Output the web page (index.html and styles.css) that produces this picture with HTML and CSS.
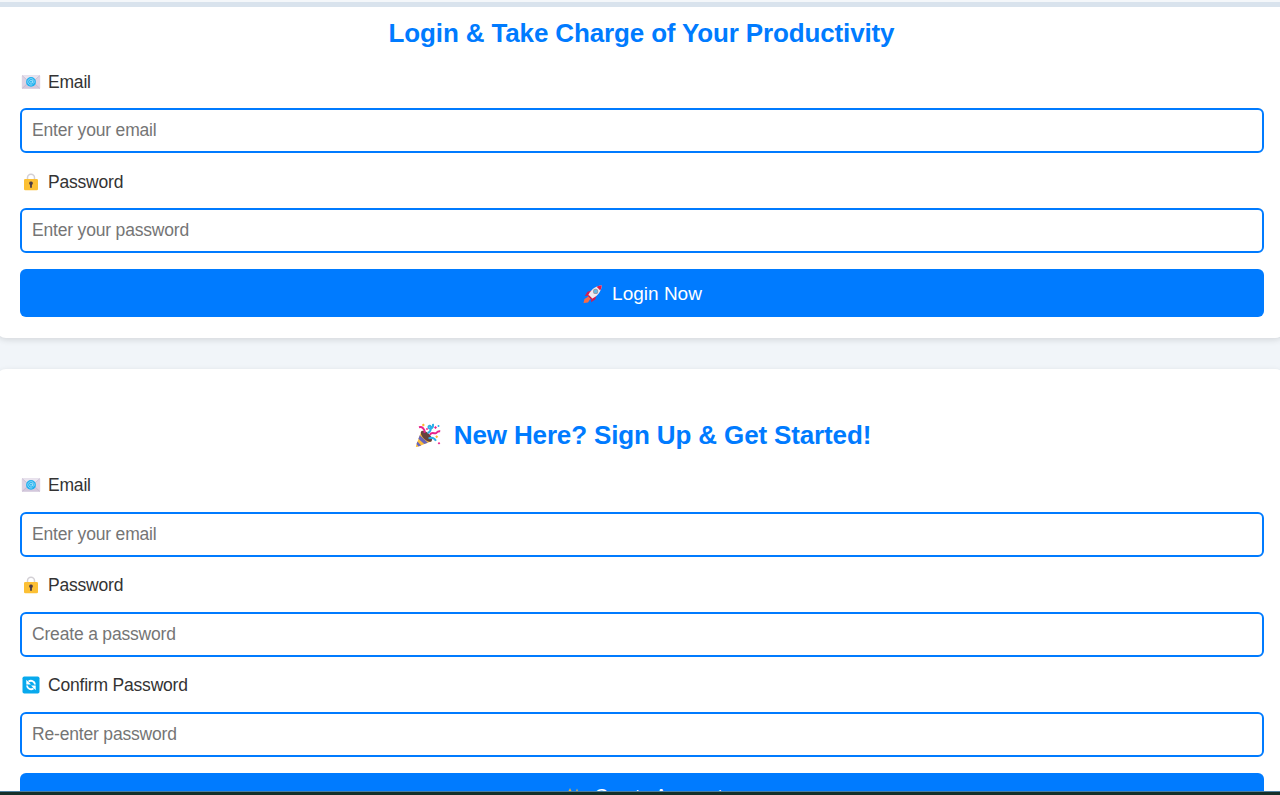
FILE: index.html
```html
<!DOCTYPE html>
<html lang="en">
<head>
<meta charset="utf-8">
<title>Login &amp; Sign Up</title>
<link rel="stylesheet" href="styles.css">
</head>
<body>
<svg width="0" height="0" class="defs" aria-hidden="true">
  <symbol id="mail" viewBox="0 0 20 16">
    <rect x=".8" y="1.200" width="18.400" height="13.600" rx=".8" fill="#ddd3e3"/>
    <path d="M1 14.600 7.500 8.500h5l6.500 6.100z" fill="#d3c8dc"/>
    <path d="M1 1.400h18L10 9.500z" fill="#e9e3ee"/>
    <path d="M1.200 1.600 10 9.500l8.800-7.900M1.200 14.400l5.300-5M18.800 14.400l-5.300-5" fill="none" stroke="#bcb0c8" stroke-width=".6"/>
    <circle cx="10" cy="7.900" r="4.900" fill="#1fb0ee"/>
    <path d="M11.600 6.200v2.500c0 1 1.600.8 1.600-.9A3.200 3.200 0 1 0 11.400 10.700" fill="none" stroke="#a9e2fb" stroke-width=".8"/>
    <circle cx="10" cy="7.800" r="1.400" fill="none" stroke="#a9e2fb" stroke-width=".8"/>
  </symbol>
  <symbol id="lock" viewBox="0 0 16 18">
    <path d="M4.500 7V4.800a3.500 3.500 0 0 1 7 0V7" fill="none" stroke="#d3d0d5" stroke-width="1.500"/>
    <rect x="1" y="6" width="14" height="11.300" rx="1.300" fill="#fcc035"/>
    <path d="M8 8.500a1.800 1.800 0 0 1 .9 3.400v2.800H7.100v-2.800A1.800 1.800 0 0 1 8 8.500z" fill="#4b3b46"/>
  </symbol>
  <symbol id="sync" viewBox="0 0 18 18">
    <rect x=".5" y=".5" width="17" height="17" rx="1.800" fill="#08a9ed"/>
    <path d="M6.500 5.500C9 4 12.600 4.800 13 8.500M11.500 12.500C9 14 5.400 13.200 5 9.500" fill="none" stroke="#fff" stroke-width="1.900"/>
    <path d="M4.300 3.800v4.700H9zM13.700 14.200V9.500H9z" fill="#fff"/>
  </symbol>
  <symbol id="rocket" viewBox="0 0 20 20">
    <path d="M5.500 12.500 1.500 15l-1 4 4.500-.6 2.500-3.900z" fill="#fa6b45"/>
    <path d="M9 6.500 4.500 7.800 1.800 12l4.500-.6zM13.500 11l-1.300 4.500L8 18.200l.6-4.500z" fill="#d51c4e"/>
    <path d="M4.800 12.200C7 6.500 12 1.800 18.800 1.200 18.500 8 13.500 13 7.800 15.200z" fill="#f0eaf0"/>
    <path d="M13.600 2.700c1.700-.9 3.400-1.400 5.200-1.500-.1 1.800-.6 3.500-1.500 5.200z" fill="#dc1d50"/>
    <path d="m4.800 12.200.8-1.500 3.700 3.700-1.500.8z" fill="#c41849"/>
    <circle cx="12.600" cy="7.400" r="2.600" fill="#9b9ca8"/><circle cx="12.600" cy="7.400" r="1.600" fill="#63bce9"/>
  </symbol>
  <symbol id="party" viewBox="0 0 26 26">
    <path d="M6.300 9.300 1 23.800c-.3 1 .2 1.400 1 1.100l14.600-5.600z" fill="#fdbd3b"/>
    <path d="m4.800 13.300 8 7.400-3.600 1.400-5.800-5.300zM2.400 19.400l3.800 4-2.700 1L1.500 22z" fill="#6765bc"/>
    <ellipse cx="11.400" cy="14.300" rx="3.400" ry="7.100" transform="rotate(-46 11.400 14.300)" fill="#65433d"/>
    <path d="M12.500 11c4-1 4.500-7.500 2-7.200-2 .3-1 3.400 1.300 2.700 2.400-.8 2.500-3 2.200-4.700M13.500 16.500c3-1.500 6-.5 7.500 2.200" fill="none" stroke="#2aaee8" stroke-width="1.900"/>
    <path d="M4 5.300c3-.8 6 1.200 5.600 5.500M14.800 13c2-3.700 4.400-1 6.200-1.800 1.500-.7.800-2.500 4.200-2" fill="none" stroke="#e8248a" stroke-width="2"/>
    <path d="m8.300 1.500 1.600 1.500-1.600 1.600L6.800 3zM21.700 13.200l1.500 1.500-1.500 1.500-1.500-1.500z" fill="#fdb82e"/>
    <path d="m20.500 4 1.500 1.400-1.500 1.500L19 5.400zM24 20l1.300 1.300-1.300 1.300-1.300-1.300z" fill="#e8248a"/>
    <circle cx="12" cy="7" r=".9" fill="#e8248a"/><circle cx="23.500" cy="4" r="1" fill="#2aaee8"/>
  </symbol>
  <symbol id="sparkle" viewBox="0 0 20 20">
    <path d="m12 2.500 2 6 5 2-5 2-2 6-2-6-5-2 5-2zM5 2l1 2.500L8.500 6 6 7l-1 3-1-3-2.500-1L4 4.500z" fill="#fdb82e"/>
  </symbol>
</svg>
<div class="page">
  <header class="strip"></header>
  <main class="forms">
    <form class="card login">
      <h2 class="title">Login &amp; Take Charge of Your Productivity</h2>
      <label class="label"><svg class="icon mail"><use href="#mail"/></svg>Email</label>
      <input class="field" type="email" placeholder="Enter your email">
      <label class="label"><svg class="icon"><use href="#lock"/></svg>Password</label>
      <input class="field" type="password" placeholder="Enter your password">
      <button class="submit" type="button"><svg class="btn-icon"><use href="#rocket"/></svg>Login Now</button>
    </form>
    <form class="card signup">
      <h2 class="title"><svg class="title-icon"><use href="#party"/></svg>New Here? Sign Up &amp; Get Started!</h2>
      <label class="label"><svg class="icon mail"><use href="#mail"/></svg>Email</label>
      <input class="field" type="email" placeholder="Enter your email">
      <label class="label"><svg class="icon"><use href="#lock"/></svg>Password</label>
      <input class="field" type="password" placeholder="Create a password">
      <label class="label"><svg class="icon"><use href="#sync"/></svg>Confirm Password</label>
      <input class="field" type="password" placeholder="Re-enter password">
      <button class="submit" type="button"><svg class="btn-icon"><use href="#sparkle"/></svg>Create Account</button>
    </form>
  </main>
  <footer class="bar"></footer>
</div>
</body>
</html>
```
FILE: styles.css
```css
* { box-sizing: border-box; }
body { margin: 0; font-family: "Liberation Sans", Arial, sans-serif; color: #333; background: #f1f5f9; }
.defs { display: none; }
.page { display: flex; flex-direction: column; height: 795px; overflow: hidden; }
.strip { flex: none; height: 7px; border-top: 2px solid #f4f7fa; background: #d9e3ed; }
.forms { flex: 1; min-height: 0; overflow: hidden; display: flex; flex-direction: column; gap: 31px; }
.card { flex: none; display: flex; flex-direction: column; margin: 0 -5px 0 -4px; padding: 0 21px 0 24px; background: #fff; box-shadow: 0 2px 6px rgba(0, 0, 0, .12); }
.login { height: 331px; padding-top: 11px; border-radius: 0 0 10px 10px; }
.signup { height: 460px; padding-top: 51px; border-radius: 10px; }
.title { display: flex; align-items: center; justify-content: center; height: 30px; margin: 0 0 5px; color: #007bff; font-size: 26px; line-height: 30px; letter-spacing: -.14px; white-space: nowrap; }
.login .title { padding-right: 1px; }
.signup .title { margin-bottom: 6px; padding-left: 2px; }
.title-icon { width: 26px; height: 26px; margin-right: 13px; }
.label { display: flex; align-items: center; height: 20px; margin: 19px 0 16px; font-size: 17.5px; line-height: 20px; letter-spacing: -.2px; }
.signup .label { margin-bottom: 17px; }
.signup .field + .label { margin-top: 18px; }
.icon { width: 18px; height: 18px; margin: 0 8px 0 2px; }
.mail { width: 20px; height: 16px; margin: 0 7px 0 1px; }
.field { width: 100%; height: 45px; padding: 0 10px; border: 2px solid #007bff; border-radius: 6px; background: #fff; font: 17.5px "Liberation Sans", Arial, sans-serif; letter-spacing: -.18px; }
.signup .field { padding-bottom: 1px; }
.field::placeholder { color: #757575; }
.submit { display: flex; align-items: center; justify-content: center; flex: none; height: 48px; margin-top: 16px; padding: 1px 0 0 1px; border: 0; border-radius: 6px; background: #007bff; color: #fff; font: 19px "Liberation Sans", Arial, sans-serif; }
.signup .submit { padding: 0 0 2px 4px; letter-spacing: -.1px; }
.btn-icon { width: 20px; height: 20px; margin-right: 9px; }
.bar { flex: none; height: 4px; border-top: 1px solid #4d7fa0; background: #142f29; }
```
